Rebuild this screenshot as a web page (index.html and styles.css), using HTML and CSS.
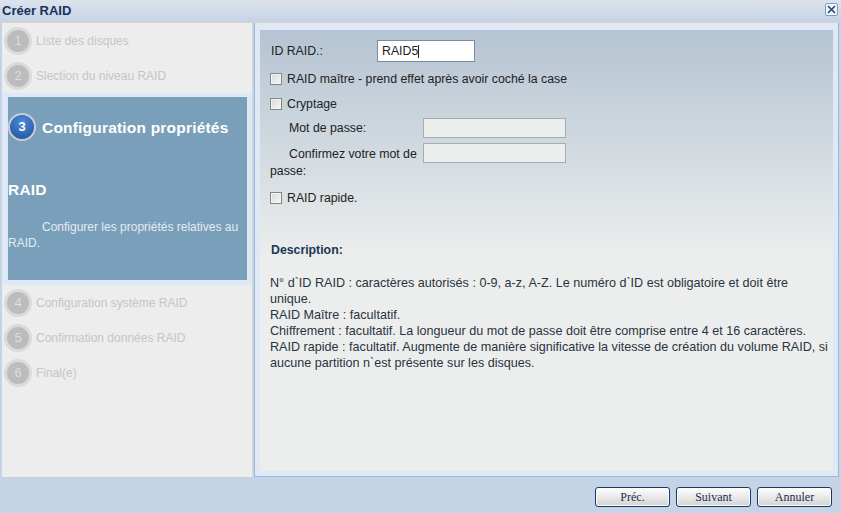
FILE: index.html
```html
<!DOCTYPE html>
<html lang="fr">
<head>
    <meta charset="UTF-8">
    <title>Créer RAID</title>
    <link rel="stylesheet" href="styles.css">
</head>
<body>

<div class="dialog">
    <div class="titlebar">
        <span class="title">Créer RAID</span>
        <span class="close">
            <svg width="9" height="9" viewBox="0 0 9 9"><path d="M1 1 L8 8 M8 1 L1 8" stroke="#244674" stroke-width="1.6" fill="none"/></svg>
        </span>
    </div>

    <div class="main">
        <div class="steps">
            <div class="step"><span class="num">1</span>Liste des disques</div>
            <div class="step"><span class="num">2</span>Slection du niveau RAID</div>
            <div class="step-active">
                <div class="active-box">
                    <div class="active-title"><span class="num-active">3</span>Configuration propriétés RAID</div>
                    <div class="active-desc">Configurer les propriétés relatives au RAID.</div>
                </div>
            </div>
            <div class="step"><span class="num">4</span>Configuration système RAID</div>
            <div class="step"><span class="num">5</span>Confirmation données RAID</div>
            <div class="step"><span class="num">6</span>Final(e)</div>
        </div>

        <div class="content">
            <div class="content-inner">
                <div class="row-id">
                    <label class="id-label">ID RAID.:</label>
                    <div class="field">RAID5<span class="caret"></span></div>
                </div>
                <div class="check-row master">
                    <input type="checkbox" class="check"> RAID maître - prend effet après avoir coché la case
                </div>
                <div class="check-row crypt">
                    <input type="checkbox" class="check"> Cryptage
                </div>
                <div class="pwd-row">
                    <label class="pwd-label">Mot de passe:</label>
                    <div class="field-off"></div>
                </div>
                <div class="pwd-row confirm">
                    <label class="pwd-label">Confirmez votre mot de passe:</label>
                    <div class="field-off"></div>
                </div>
                <div class="check-row quick">
                    <input type="checkbox" class="check"> RAID rapide.
                </div>

                <div class="desc-title">Description:</div>
                <p class="desc-text">
                    N° d`ID RAID : caractères autorisés : 0-9, a-z, A-Z. Le numéro d`ID est obligatoire et doit être<br>
                    unique.<br>
                    RAID Maître : facultatif.<br>
                    Chiffrement : facultatif. La longueur du mot de passe doit être comprise entre 4 et 16 caractères.<br>
                    RAID rapide : facultatif. Augmente de manière significative la vitesse de création du volume RAID, si<br>
                    aucune partition n`est présente sur les disques.
                </p>
            </div>
        </div>
    </div>

    <div class="footer">
        <button class="btn">Préc.</button>
        <button class="btn">Suivant</button>
        <button class="btn">Annuler</button>
    </div>
</div>

</body>
</html>
```

FILE: styles.css
```css
body {
    margin: 0;
    background: #c4d3e5;
    font-family: "Liberation Sans", Arial, sans-serif;
    font-size: 12px;
    color: #222;
}
.dialog {
    width: 841px;
    height: 513px;
    display: flex;
    flex-direction: column;
}
.titlebar {
    height: 22px;
    display: flex;
    align-items: center;
    justify-content: space-between;
    padding: 0 3px 0 2px;
    background: linear-gradient(#dce3ed, #c5d3e5);
    border-bottom: 1px solid #d8d4cc;
}
.title {
    font-weight: bold;
    font-size: 13px;
    color: #17325a;
    margin-top: -1px;
}
.close {
    width: 11px;
    height: 11px;
    margin-top: -3px;
    border: 1px solid #7d9bcf;
    border-radius: 2px;
    background: #f3f6fb;
    display: flex;
    align-items: center;
    justify-content: center;
}
.main {
    height: 455px;
    display: flex;
    padding-left: 2px;
}
.steps {
    width: 250px;
    flex-shrink: 0;
    height: 454px;
    background: #ecedec;
    border-bottom: 1px solid #cdcdcd;
    border-right: 1px solid #d6d6d6;
}
.step {
    height: 35px;
    display: flex;
    align-items: center;
    padding-left: 2px;
    color: #c6c6c6;
}
.num {
    width: 22px;
    height: 22px;
    border: 3px solid #dadada;
    border-radius: 50%;
    background: #bcbcbc;
    color: #dedede;
    font-size: 13px;
    display: flex;
    align-items: center;
    justify-content: center;
    margin-right: 4px;
}
.step-active {
    background: #dfe8f5;
    padding: 4px 5px 5px 6px;
}
.active-box {
    background: #7a9fba;
    height: 183px;
}
.active-title {
    font-size: 15.5px;
    font-weight: bold;
    letter-spacing: 0.2px;
    color: #fff;
    line-height: 62px;
}
.num-active {
    display: inline-flex;
    align-items: center;
    justify-content: center;
    vertical-align: middle;
    width: 24px;
    height: 24px;
    margin: -4px 6px 0 0;
    border: 2px solid #c9cdd2;
    border-radius: 50%;
    background: radial-gradient(circle at 50% 30%, #4c8ad8, #1f4f9e);
    font-size: 13px;
    letter-spacing: 0;
    line-height: 24px;
}
.active-desc {
    color: #e4ebf2;
    line-height: 16px;
    text-indent: 34px;
    margin-top: -2px;
    padding-right: 4px;
}
.content {
    flex: 1;
    min-width: 0;
    margin-left: 1px;
    margin-right: 2px;
    height: 454px;
    background: #dfe8f5;
    border: 1px solid #9db6de;
    border-top: none;
    padding: 7px 5px 5px 5px;
    box-sizing: border-box;
}
.content-inner {
    height: 100%;
    background: linear-gradient(#b5c4d2, #eceeed 52%);
    padding: 0 8px 0 10px;
    box-sizing: border-box;
    overflow: hidden;
    font-size: 12.3px;
}
.row-id {
    display: flex;
    align-items: center;
    margin-top: 10px;
    height: 22px;
}
.id-label {
    width: 106px;
    padding-left: 1px;
}
.field {
    width: 92px;
    height: 20px;
    border: 1px solid #7b8c9e;
    background: #fff;
    display: flex;
    align-items: center;
    padding-left: 4px;
}
.caret {
    width: 1px;
    height: 13px;
    background: #222;
}
.check-row {
    display: flex;
    align-items: center;
    height: 20px;
    padding-top: 1px;
}
.check {
    appearance: none;
    width: 12px;
    height: 12px;
    margin: -1px 5px 0 0;
    border: 1px solid #858585;
    background: linear-gradient(135deg, #d8d8d8, #f8f8f8);
    box-shadow: inset 0 0 0 1px #f4f4f4;
    box-sizing: border-box;
}
.master {
    margin-top: 6px;
}
.crypt {
    margin-top: 4px;
}
.quick {
    margin-top: 7px;
}
.pwd-row {
    display: flex;
    align-items: flex-start;
    margin-top: 4px;
}
.pwd-row.confirm {
    margin-top: 5px;
}
.pwd-label {
    width: 153px;
    text-indent: 19px;
    line-height: 17px;
    padding-top: 2px;
}
.confirm .pwd-label {
    padding-top: 3px;
}
.field-off {
    width: 141px;
    height: 18px;
    border: 1px solid #a3adb7;
    background: #eceeee;
}
.desc-title {
    margin-top: 34px;
    font-weight: bold;
    color: #1d3557;
    line-height: 16px;
    padding-left: 1px;
}
.desc-text {
    margin: 17px 0 0 0;
    font-size: 12.6px;
    line-height: 16px;
    color: #2a3340;
    white-space: nowrap;
}
.footer {
    height: 35px;
    display: flex;
    justify-content: flex-end;
    gap: 6px;
    padding: 9px 9px 0 0;
    box-sizing: border-box;
}
.btn {
    width: 75px;
    height: 20px;
    border: 1px solid #163a66;
    border-radius: 3px;
    background: linear-gradient(#ffffff, #e9e9e9 50%, #d3d3d3);
    box-shadow: inset 0 0 0 1px #fbfbfb;
    font-family: "Liberation Serif", "Times New Roman", serif;
    font-size: 12px;
    color: #1e2c48;
    padding: 0;
}
```
